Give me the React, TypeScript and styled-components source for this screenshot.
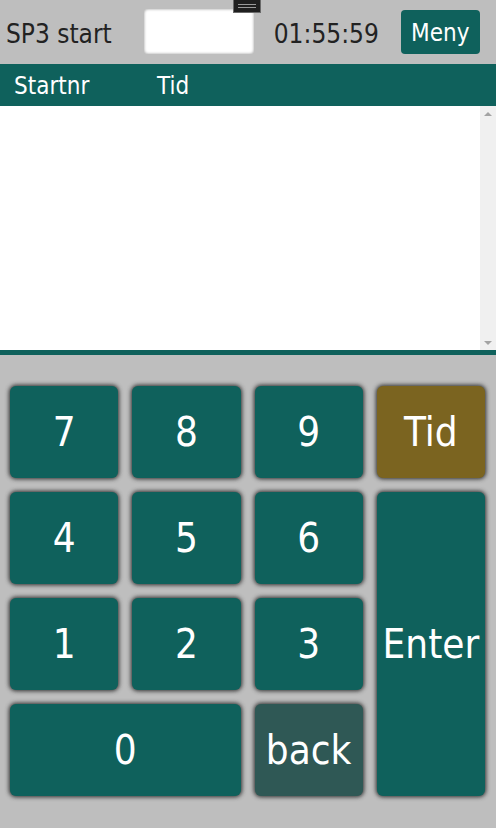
import React from "react";
import styled, { createGlobalStyle } from "styled-components";

const Global = createGlobalStyle`
  html, body { margin: 0; padding: 0; background: #bebebe; }
  body { font-family: "DejaVu Sans", Tahoma, sans-serif; font-stretch: condensed; }
  * { box-sizing: border-box; }
`;

const Page = styled.div`
  width: 496px;
  height: 828px;
  background: #bebebe;
  position: relative;
  display: flex;
  flex-direction: column;
`;

const TopBar = styled.div`
  height: 64px;
  display: flex;
  align-items: center;
  padding-left: 6px;
  color: #222;
`;

const Title = styled.div`
  font-size: 26px;
  line-height: 1;
  margin-top: 3px;
`;

const InputBox = styled.div`
  width: 110px;
  height: 45px;
  margin-left: 32px;
  margin-top: -1px;
  background: #fff;
  border-radius: 4px;
  box-shadow: inset 0 0 3px #9a9a9a;
`;

const Clock = styled.div`
  font-size: 26px;
  line-height: 1;
  margin-left: 20px;
  margin-top: 3px;
`;

const MenuButton = styled.div`
  width: 79px;
  height: 44px;
  margin-left: 22px;
  margin-top: -1px;
  background: #0f615c;
  border-radius: 4px;
  color: #fff;
  font-size: 24px;
  display: flex;
  align-items: center;
  justify-content: center;
  padding-top: 3px;
`;

const Handle = styled.div`
  position: absolute;
  left: 233px;
  top: 0;
  width: 28px;
  height: 13px;
  background: #1f1f1f;
  border: 1px solid #6a6a6a;
  border-top: none;
  display: flex;
  flex-direction: column;
  align-items: center;
  justify-content: center;
  gap: 2px;
`;

const HandleLine = styled.div`
  width: 18px;
  height: 1px;
  background: #9a9a9a;
`;

const Header = styled.div`
  height: 42px;
  background: #0f615c;
  color: #fff;
  display: flex;
  align-items: center;
  padding-left: 14px;
  font-size: 24px;
`;

const HeadCell = styled.div<{ $w?: number }>`
  width: ${(p) => (p.$w ? `${p.$w}px` : "auto")};
  line-height: 1;
  margin-top: 2px;
`;

const List = styled.div`
  height: 249px;
  background: #fff;
  border-bottom: 5px solid #0f615c;
  display: flex;
`;

const ListBody = styled.div`
  flex: 1;
`;

const Scrollbar = styled.div`
  width: 16px;
  background: #f0f0f0;
  display: flex;
  flex-direction: column;
  justify-content: space-between;
  align-items: center;
  padding: 6px 0 5px;
`;

const Arrow = styled.div<{ $down?: boolean }>`
  width: 0;
  height: 0;
  border-left: 4px solid transparent;
  border-right: 4px solid transparent;
  ${(p) =>
    p.$down
      ? "border-top: 4px solid #a3a3a3;"
      : "border-bottom: 4px solid #a3a3a3;"}
`;

const Keypad = styled.div`
  display: grid;
  grid-template-columns: repeat(4, 1fr);
  grid-auto-rows: 92px;
  column-gap: 14px;
  row-gap: 14px;
  width: 475px;
  margin-left: 10px;
  margin-top: 31px;
`;

const Key = styled.div<{ $bg?: string; $col?: string; $row?: string }>`
  background: ${(p) => p.$bg || "#0f615c"};
  grid-column: ${(p) => p.$col || "auto"};
  grid-row: ${(p) => p.$row || "auto"};
  border-radius: 6px;
  box-shadow: 0 0 4px 1px rgba(30, 30, 30, 0.9);
  color: #fff;
  font-size: 40px;
  display: flex;
  align-items: center;
  justify-content: center;
  padding-bottom: 1px;
`;

export default function App() {
  return (
    <Page>
      <Global />
      <TopBar>
        <Title>SP3 start</Title>
        <InputBox />
        <Clock>01:55:59</Clock>
        <MenuButton>Meny</MenuButton>
      </TopBar>
      <Handle>
        <HandleLine />
        <HandleLine />
      </Handle>
      <Header>
        <HeadCell $w={143}>Startnr</HeadCell>
        <HeadCell>Tid</HeadCell>
      </Header>
      <List>
        <ListBody />
        <Scrollbar>
          <Arrow />
          <Arrow $down />
        </Scrollbar>
      </List>
      <Keypad>
        <Key>7</Key>
        <Key>8</Key>
        <Key>9</Key>
        <Key $bg="#7b6420">Tid</Key>
        <Key>4</Key>
        <Key>5</Key>
        <Key>6</Key>
        <Key $col="4" $row="2 / span 3">Enter</Key>
        <Key>1</Key>
        <Key>2</Key>
        <Key>3</Key>
        <Key $col="1 / span 2">0</Key>
        <Key $bg="#2f5855">back</Key>
      </Keypad>
    </Page>
  );
}
